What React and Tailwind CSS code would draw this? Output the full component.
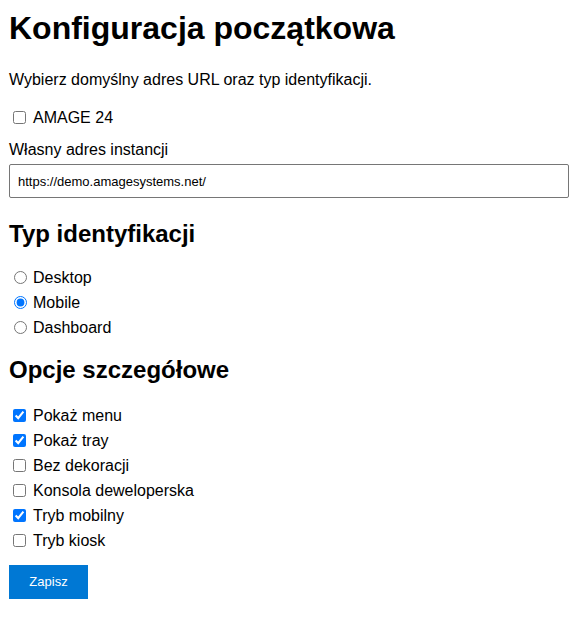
import { useState } from 'react';

const OPTIONS = [
  { id: 'menu', label: 'Pokaż menu', checked: true },
  { id: 'tray', label: 'Pokaż tray', checked: true },
  { id: 'frameless', label: 'Bez dekoracji', checked: false },
  { id: 'devtools', label: 'Konsola deweloperska', checked: false },
  { id: 'mobile', label: 'Tryb mobilny', checked: true },
  { id: 'kiosk', label: 'Tryb kiosk', checked: false },
];

const MODES = ['Desktop', 'Mobile', 'Dashboard'];

const CheckRow = ({ label, checked, onChange }) => (
  <label className="flex items-center leading-[25px] h-[25px]">
    <input
      type="checkbox"
      checked={checked}
      onChange={onChange}
      className="m-0 ml-[4px] mr-[7px] w-[13px] h-[13px]"
    />
    {label}
  </label>
);

export default function App() {
  const [amage, setAmage] = useState(false);
  const [url, setUrl] = useState('https://demo.amagesystems.net/');
  const [mode, setMode] = useState('Mobile');
  const [opts, setOpts] = useState(
    Object.fromEntries(OPTIONS.map((o) => [o.id, o.checked]))
  );

  return (
    <div className="px-[9px] pt-[10px] pb-[20px] text-black text-[16px] font-['Liberation_Sans',Arial,sans-serif]">
      <h1 className="text-[32px] font-bold leading-[37px]">Konfiguracja początkowa</h1>

      <p className="mt-[20px] leading-[25px]">
        Wybierz domyślny adres URL oraz typ identyfikacji.
      </p>

      <div className="mt-[13px]">
        <CheckRow label="AMAGE 24" checked={amage} onChange={() => setAmage(!amage)} />
      </div>

      <label className="block mt-[7px] leading-[25px]">Własny adres instancji</label>
      <input
        type="text"
        value={url}
        onChange={(e) => setUrl(e.target.value)}
        className="mt-[2px] block w-full h-[34px] px-[8px] border border-[#767676] rounded-[2px] text-[13px] text-black bg-white"
      />

      <h2 className="mt-[22px] text-[24px] font-bold leading-[28px]">Typ identyfikacji</h2>

      <div className="mt-[17px]">
        {MODES.map((m) => (
          <label key={m} className="flex items-center leading-[25px] h-[25px]">
            <input
              type="radio"
              name="mode"
              checked={mode === m}
              onChange={() => setMode(m)}
              className="m-0 ml-[5px] mr-[6px] w-[13px] h-[13px]"
            />
            {m}
          </label>
        ))}
      </div>

      <h2 className="mt-[16px] text-[24px] font-bold leading-[28px]">Opcje szczegółowe</h2>

      <div className="mt-[19px]">
        {OPTIONS.map((o) => (
          <CheckRow
            key={o.id}
            label={o.label}
            checked={opts[o.id]}
            onChange={() => setOpts({ ...opts, [o.id]: !opts[o.id] })}
          />
        ))}
      </div>

      <button
        type="button"
        className="mt-[12px] w-[79px] h-[34px] bg-[#0078d4] text-white text-[13px]"
      >
        Zapisz
      </button>
    </div>
  );
}
